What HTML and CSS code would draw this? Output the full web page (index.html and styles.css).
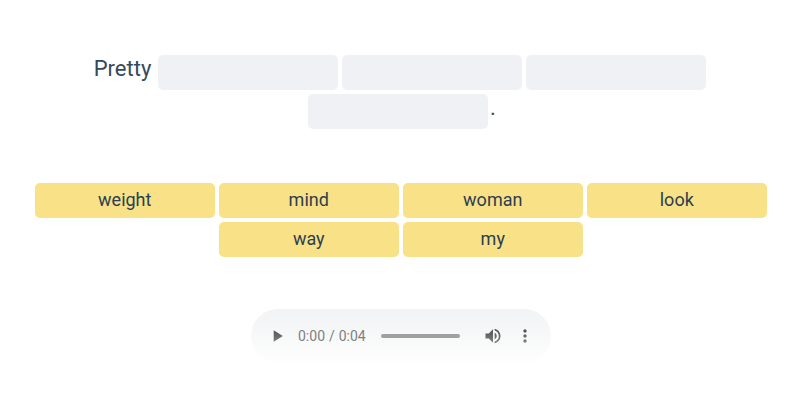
FILE: index.html
```html
<!DOCTYPE html>
<html lang="en">
<head>
<meta charset="utf-8">
<title>Exercise</title>
<link rel="stylesheet" href="styles.css">
</head>
<body>
<main class="exercise">
  <div class="sentence">
    <div class="line"><span class="word">Pretty</span><span class="slot"></span><span class="slot"></span><span class="slot"></span></div>
    <div class="line last"><span class="slot"></span><span class="stop">.</span></div>
  </div>
  <div class="options">
    <div class="option">weight</div><div class="option">mind</div><div class="option">woman</div><div class="option">look</div><div class="option">way</div><div class="option">my</div>
  </div>
  <div class="player">
    <svg class="icon play" viewBox="0 0 24 24"><defs><linearGradient id="fade" gradientUnits="userSpaceOnUse" x1="0" y1="3" x2="0" y2="21"><stop offset="0" stop-color="#4c4c4c"/><stop offset="1" stop-color="#858585"/></linearGradient></defs><path d="M8 5v14l11-7z"/></svg>
    <span class="time">0:00 / 0:04</span>
    <span class="track"></span>
    <svg class="icon volume" viewBox="0 0 24 24"><path d="M3 9v6h4l5 5V4L7 9H3zm13.500 3c0-1.770-1.020-3.290-2.500-4.030v8.050c1.480-.73 2.500-2.250 2.500-4.020zM14 3.230v2.060c2.890.86 5 3.540 5 6.710s-2.110 5.850-5 6.710v2.060c4.010-.91 7-4.490 7-8.770s-2.990-7.860-7-8.770z"/></svg>
    <svg class="icon more" viewBox="0 0 24 24"><path d="M12 8c1.100 0 2-.9 2-2s-.9-2-2-2-2 .9-2 2 .9 2 2 2zm0 2c-1.100 0-2 .9-2 2s.9 2 2 2 2-.9 2-2-.9-2-2-2zm0 6c-1.100 0-2 .9-2 2s.9 2 2 2 2-.9 2-2-.9-2-2-2z"/></svg>
  </div>
</main>
</body>
</html>
```
FILE: styles.css
```css
body {
  margin: 0;
  background: #fff;
  color: #34495e;
  font-family: Roboto, sans-serif;
}
.exercise {
  height: 400px;
  box-sizing: border-box;
  padding-top: 55px;
  overflow: hidden;
}
.sentence {
  display: flex;
  flex-direction: column;
  gap: 4px;
  font-size: 22px;
  line-height: 28px;
}
.line {
  display: flex;
  justify-content: center;
  gap: 4px;
  height: 35px;
}
.last { padding-left: 4px; }
.word {
  margin-left: -.5px;
  margin-right: 2.5px;
}
.slot {
  width: 180px;
  height: 35px;
  border-radius: 5px;
  background: #f0f1f5;
}
.stop { margin-left: -2px; }
.options {
  display: flex;
  flex-wrap: wrap;
  justify-content: center;
  gap: 4px;
  width: 732px;
  margin: 54px 0 0 35px;
}
.option {
  box-sizing: border-box;
  width: 180px;
  height: 35px;
  padding-right: .5px;
  border-radius: 5px;
  background: #f8e187;
  color: #2c3e50;
  font-size: 18px;
  line-height: 34px;
  text-align: center;
}
.player {
  display: flex;
  align-items: center;
  box-sizing: border-box;
  width: 300px;
  height: 54px;
  margin: 52px 0 0 251px;
  padding-left: 16px;
  border-radius: 27px;
  background: linear-gradient(#f1f3f4, #fefefe);
}
.icon {
  width: 20px;
  height: 20px;
  fill: url(#fade);
}
.time {
  width: 67px;
  margin-left: 11px;
  font-size: 14px;
  word-spacing: .5px;
  color: #808080;
  white-space: nowrap;
}
.track {
  width: 79px;
  height: 4px;
  margin-left: 16px;
  border-radius: 2px;
  background: #a0a0a0;
}
.volume { margin-left: 23px; }
.more { margin-left: 12px; }
```
